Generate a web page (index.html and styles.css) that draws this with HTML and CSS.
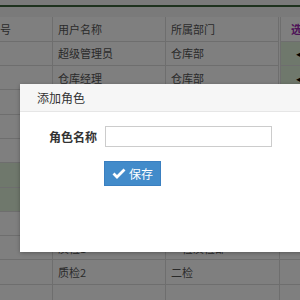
FILE: index.html
```html
<!DOCTYPE html>
<html lang="zh">
<head>
    <meta charset="UTF-8">
    <title>角色管理</title>
    <link rel="stylesheet" href="styles.css">
</head>
<body>

    <div class="topbar"><div class="topline"></div></div>

    <div class="grid-wrap">
        <table class="grid">
            <tr class="head">
                <td class="c1">编号</td>
                <td class="c2">用户名称</td>
                <td class="c3">所属部门</td>
                <td class="c4"><span class="pick">选择</span></td>
            </tr>
            <tr><td></td><td>超级管理员</td><td>仓库部</td><td class="op"><span class="arrow">&#9668;</span></td></tr>
            <tr><td></td><td>仓库经理</td><td>仓库部</td><td class="op"><span class="arrow">&#9668;</span></td></tr>
            <tr><td></td><td>仓管员</td><td>仓库部</td><td></td></tr>
            <tr><td></td><td>采购员</td><td>采购部</td><td></td></tr>
            <tr><td></td><td>销售员</td><td>销售部</td><td></td></tr>
            <tr class="sel"><td></td><td>财务</td><td>财务部</td><td></td></tr>
            <tr class="sel"><td></td><td>出纳</td><td>财务部</td><td></td></tr>
            <tr><td></td><td>质检</td><td>质检部</td><td></td></tr>
            <tr><td></td><td>质检1</td><td>一检质检部</td><td></td></tr>
            <tr><td></td><td>质检2</td><td>二检</td><td></td></tr>
            <tr><td></td><td>&nbsp;</td><td>&nbsp;</td><td></td></tr>
        </table>
    </div>

    <div class="mask"></div>

    <div class="dialog">
        <div class="dialog-title">添加角色</div>
        <div class="dialog-body">
            <div class="form-row">
                <label class="form-label" for="roleName">角色名称</label>
                <input type="text" id="roleName" class="form-input">
            </div>
            <div class="form-row">
                <span class="form-label"></span>
                <button class="btn-save">
                    <svg width="14" height="11" viewBox="0 0 14 11"><path d="M1.5 5.5 L5 9 L12.5 1.5" fill="none" stroke="#fff" stroke-width="2.8"/></svg>
                    保存
                </button>
            </div>
        </div>
    </div>

</body>
</html>
```

FILE: styles.css
```css
body {
    margin: 0;
    width: 300px;
    height: 300px;
    overflow: hidden;
    background: #fff;
    font-family: "Noto Sans CJK SC", "Liberation Sans", sans-serif;
    position: relative;
}

.topbar {
    height: 17px;
    padding-top: 5px;
    box-sizing: border-box;
    background: #f4f4f4;
}

.topline {
    height: 2px;
    background: #3c643c;
}

.grid-wrap {
    overflow: hidden;
}

.grid {
    margin-left: -17px;
    border-collapse: collapse;
    table-layout: fixed;
    width: 360px;
    font-size: 11px;
    color: #555;
}

.grid td {
    height: 24.3px;
    padding: 0 0 0 5px;
    border: 1px solid #ddd;
    white-space: nowrap;
    overflow: hidden;
    box-sizing: border-box;
}

.grid tr:first-child td {
    border-top: none;
}

.grid .c1 { width: 69px; }
.grid .c2 { width: 113px; }
.grid .c3 { width: 114px; }
.grid .c4 {
    border-left: 3px double #ddd;
    padding-left: 10px;
}

.pick {
    color: #9c27b0;
    font-weight: bold;
}

.grid .op {
    background: #dff0d8;
    border-left: 3px double #ddd;
    padding-left: 13px;
}

.arrow {
    color: #000;
    font-size: 11px;
}

.grid .sel td {
    background: #dff0d8;
}

.mask {
    position: absolute;
    left: 0;
    top: 0;
    width: 100%;
    height: 100%;
    background: rgba(0, 0, 0, 0.5);
}

.dialog {
    position: absolute;
    left: 20px;
    top: 84px;
    width: 320px;
    height: 168px;
    background: #fff;
    box-shadow: 0 1px 4px rgba(0, 0, 0, 0.3);
}

.dialog-title {
    height: 27px;
    line-height: 27px;
    padding-left: 17px;
    font-size: 12px;
    color: #333;
    background: #f6f6f6;
    border-bottom: 1px solid #e6e6e6;
}

.dialog-body {
    padding-top: 14px;
    display: flex;
    flex-direction: column;
    gap: 14px;
}

.form-row {
    display: flex;
    align-items: center;
    gap: 8px;
}

.form-label {
    width: 77px;
    text-align: right;
    font-size: 12px;
    font-weight: bold;
    color: #333;
}

.form-input {
    width: 167px;
    height: 21px;
    margin: 0;
    padding: 0 4px;
    box-sizing: border-box;
    border: 1px solid #ccc;
}

.btn-save {
    width: 57px;
    height: 25px;
    margin-left: -1px;
    padding: 0;
    border: 1px solid #3a7fc0;
    background: #428bca;
    color: #fff;
    font-family: "Noto Sans CJK SC", sans-serif;
    font-size: 12px;
    display: flex;
    align-items: center;
    justify-content: center;
    gap: 3px;
}
```
